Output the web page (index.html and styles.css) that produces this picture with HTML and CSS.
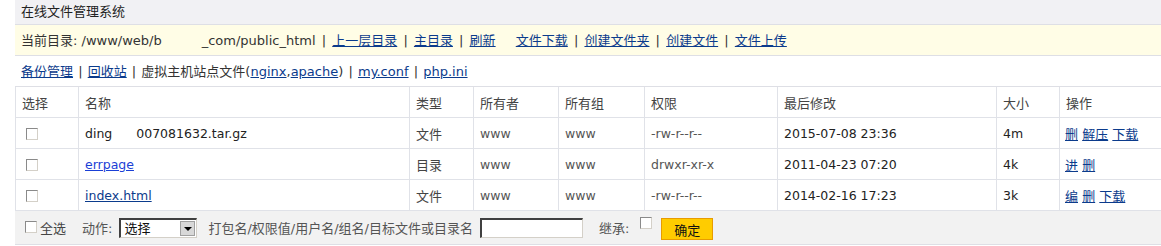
FILE: index.html
```html
<!DOCTYPE html>
<html lang="zh-CN">
<head>
    <meta charset="UTF-8">
    <title>在线文件管理系统</title>
    <link rel="stylesheet" href="styles.css">
</head>
<body>
    <div class="wrap">
        <div class="title">在线文件管理系统</div>

        <div class="pathbar">
            当前目录: /www/web/b<span class="blur"></span>_com/public_html
            <span class="sep">|</span> <a href="#">上一层目录</a>
            <span class="sep">|</span> <a href="#">主目录</a>
            <span class="sep">|</span> <a href="#">刷新</a>
            <a href="#" class="gap">文件下载</a>
            <span class="sep">|</span> <a href="#">创建文件夹</a>
            <span class="sep">|</span> <a href="#">创建文件</a>
            <span class="sep">|</span> <a href="#">文件上传</a>
        </div>

        <div class="toolbar">
            <a href="#">备份管理</a>
            <span class="sep">|</span> <a href="#">回收站</a>
            <span class="sep">|</span> 虚拟主机站点文件(<a href="#">nginx</a>,<a href="#">apache</a>)
            <span class="sep">|</span> <a href="#">my.conf</a>
            <span class="sep">|</span> <a href="#">php.ini</a>
        </div>

        <table class="files">
            <colgroup>
                <col style="width: 63px">
                <col style="width: 331px">
                <col style="width: 64px">
                <col style="width: 85px">
                <col style="width: 86px">
                <col style="width: 133px">
                <col style="width: 219px">
                <col style="width: 63px">
                <col>
            </colgroup>
            <tr>
                <th>选择</th>
                <th>名称</th>
                <th>类型</th>
                <th>所有者</th>
                <th>所有组</th>
                <th>权限</th>
                <th>最后修改</th>
                <th>大小</th>
                <th>操作</th>
            </tr>
            <tr>
                <td><span class="box"></span></td>
                <td class="name">ding<span class="blur short"></span>007081632.tar.gz</td>
                <td>文件</td>
                <td class="dim">www</td>
                <td class="dim">www</td>
                <td class="dim">-rw-r--r--</td>
                <td class="dark">2015-07-08 23:36</td>
                <td class="dark">4m</td>
                <td class="ops"><a href="#">删</a> <a href="#">解压</a> <a href="#">下载</a></td>
            </tr>
            <tr>
                <td><span class="box"></span></td>
                <td class="name"><a href="#" class="fresh">errpage</a></td>
                <td>目录</td>
                <td class="dim">www</td>
                <td class="dim">www</td>
                <td class="dim">drwxr-xr-x</td>
                <td class="dark">2011-04-23 07:20</td>
                <td class="dark">4k</td>
                <td class="ops"><a href="#">进</a> <a href="#">删</a></td>
            </tr>
            <tr>
                <td><span class="box"></span></td>
                <td class="name"><a href="#">index.html</a></td>
                <td>文件</td>
                <td class="dim">www</td>
                <td class="dim">www</td>
                <td class="dim">-rw-r--r--</td>
                <td class="dark">2014-02-16 17:23</td>
                <td class="dark">3k</td>
                <td class="ops"><a href="#">编</a> <a href="#">删</a> <a href="#">下载</a></td>
            </tr>
        </table>

        <div class="footer">
            <span class="box"></span><span class="all">全选</span>
            <span class="label">动作:</span>
            <span class="select">选择<span class="arrow"></span></span>
            <span class="hint">打包名/权限值/用户名/组名/目标文件或目录名</span>
            <span class="field"></span>
            <span class="label inherit">继承:</span>
            <span class="box raised"></span>
            <button class="ok">确定</button>
        </div>
    </div>
</body>
</html>
```

FILE: styles.css
```css
body {
    margin: 0;
    padding: 0 0 0 15px;
    background-color: #fff;
    font-family: "DejaVu Sans", "Noto Sans CJK SC", sans-serif;
    font-size: 13px;
    color: #333;
}

a {
    color: #0b3b8c;
}

.sep {
    color: #333;
    margin: 0 1px;
}

.pathbar .sep {
    margin: 0 2px;
}

.blur {
    display: inline-block;
    width: 40px;
}

.blur.short {
    width: 24px;
}

.title {
    height: 24px;
    line-height: 24px;
    padding-left: 6px;
    background-color: #f1f1f4;
    border-bottom: 1px solid #dedfe5;
    color: #222;
}

.pathbar {
    height: 30px;
    line-height: 31px;
    padding-left: 6px;
    background-color: #fffde6;
    border-bottom: 1px solid #dedfe5;
    white-space: nowrap;
}

.pathbar .gap {
    margin-left: 16px;
}

.toolbar {
    height: 30px;
    line-height: 31px;
    padding-left: 6px;
    border-bottom: 1px solid #dedfe5;
    white-space: nowrap;
}

.files {
    width: 1146px;
    border-collapse: collapse;
    table-layout: fixed;
}

.files th,
.files td {
    height: 30px;
    padding: 0 0 0 6px;
    border: 1px solid #e0e2e8;
    border-top: none;
    text-align: left;
    font-weight: normal;
    white-space: nowrap;
    color: #444;
}

.files tr > :last-child {
    border-right: none;
}

.files .dim {
    font-size: 12.5px;
    color: #555;
}

.files .dark {
    font-size: 12.5px;
    color: #222;
}

.files .name {
    font-size: 12.5px;
    color: #222;
}

.files .ops {
    padding-left: 5px;
}

a.fresh {
    color: #1a3fd6;
}

.box {
    display: inline-block;
    box-sizing: border-box;
    width: 12px;
    height: 12px;
    margin-left: 4px;
    vertical-align: middle;
    border: 1px solid #8a8a8a;
    border-right-color: #d4d0c8;
    border-bottom-color: #d4d0c8;
    background-color: #fff;
}

.footer {
    height: 33px;
    display: flex;
    align-items: center;
    padding-left: 6px;
    background-color: #f2f2f2;
    border-bottom: 1px solid #dedfe5;
    white-space: nowrap;
}

.footer .box {
    margin-left: 4px;
    position: relative;
    top: -1px;
}

.all {
    margin-left: 3px;
    color: #444;
}

.label {
    margin-left: 16px;
    color: #555;
}

.select {
    box-sizing: border-box;
    position: relative;
    width: 78px;
    height: 20px;
    line-height: 17px;
    margin-left: 7px;
    padding-left: 3px;
    border: 1px solid #404040;
    border-top-width: 2px;
    border-left-width: 2px;
    border-right-color: #d4d0c8;
    border-bottom-color: #d4d0c8;
    background-color: #fff;
    color: #111;
}

.arrow {
    position: absolute;
    right: 1px;
    top: 1px;
    width: 15px;
    height: 15px;
    background-color: #d8d8d8;
    border: 1px solid #a0a0a0;
    box-sizing: border-box;
}

.arrow::after {
    content: "";
    position: absolute;
    left: 3px;
    top: 5px;
    border-left: 4px solid transparent;
    border-right: 4px solid transparent;
    border-top: 4px solid #000;
}

.hint {
    margin-left: 11px;
    color: #555;
}

.field {
    box-sizing: border-box;
    width: 103px;
    height: 20px;
    margin-left: 7px;
    border: 1px solid #d4d0c8;
    border-top: 2px solid #404040;
    border-left: 2px solid #404040;
    background-color: #fff;
}

.inherit {
    margin-left: 16px;
}

.footer .raised {
    margin-left: 11px;
    top: -5px;
}

.ok {
    box-sizing: border-box;
    width: 52px;
    height: 22px;
    margin-left: 9px;
    margin-top: 3px;
    padding: 0;
    border: 1px solid #e89c00;
    background-color: #ffcc00;
    color: #111;
    font-family: "Noto Sans CJK SC", sans-serif;
    font-size: 13px;
}
```
